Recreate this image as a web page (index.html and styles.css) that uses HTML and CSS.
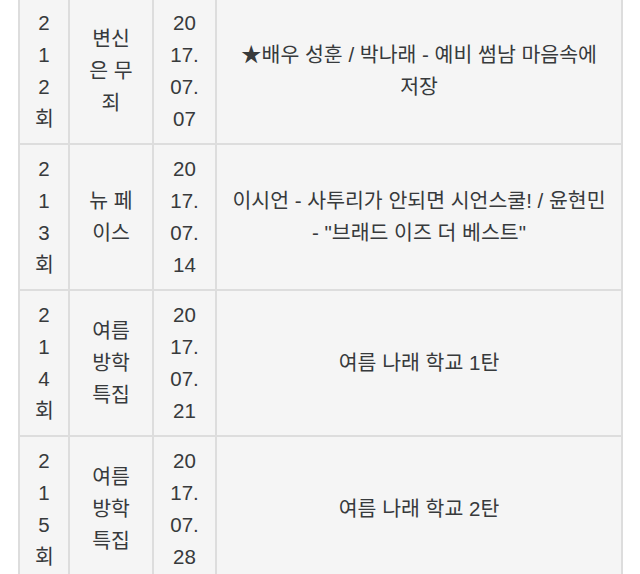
FILE: index.html
```html
<!DOCTYPE html>
<html lang="ko">
<head>
<meta charset="utf-8">
<title>방송 목록</title>
<link rel="stylesheet" href="styles.css">
</head>
<body>
<div class="wrap">
  <table class="episodes">
    <colgroup>
      <col class="c-no">
      <col class="c-title">
      <col class="c-date">
      <col class="c-desc">
    </colgroup>
    <tbody>
      <tr>
        <td class="no">212회</td>
        <td class="title">변신은 무죄</td>
        <td class="date">2017.07.07</td>
        <td class="desc">★배우 성훈 / 박나래 - 예비 썸남 마음속에 저장</td>
      </tr>
      <tr>
        <td class="no">213회</td>
        <td class="title">뉴 페이스</td>
        <td class="date">2017.07.14</td>
        <td class="desc">이시언 - 사투리가 안되면 시언스쿨! / 윤현민 - "브래드 이즈 더 베스트"</td>
      </tr>
      <tr>
        <td class="no">214회</td>
        <td class="title">여름 방학 특집</td>
        <td class="date">2017.07.21</td>
        <td class="desc">여름 나래 학교 1탄</td>
      </tr>
      <tr>
        <td class="no">215회</td>
        <td class="title">여름 방학 특집</td>
        <td class="date">2017.07.28</td>
        <td class="desc">여름 나래 학교 2탄</td>
      </tr>
    </tbody>
  </table>
</div>
</body>
</html>
```

FILE: styles.css
```css
html, body {
  margin: 0;
  padding: 0;
  background: #ffffff;
}

body {
  font-family: "Liberation Sans", "Noto Sans CJK KR", sans-serif;
  font-size: 20.5px;
  line-height: 32px;
  color: #373a3c;
  overflow: hidden;
}

.wrap {
  padding-left: 18px;
  margin-top: -3px;
}

.episodes {
  width: 605px;
  table-layout: fixed;
  border-collapse: collapse;
  background: #f5f5f5;
}

.c-no { width: 50px; }
.c-title { width: 84px; }
.c-date { width: 63px; }
.c-desc { width: 406px; }

.episodes td {
  border: 2px solid #dddddd;
  padding: 8px 15px;
  text-align: center;
  vertical-align: middle;
}

.episodes td.desc {
  padding: 8px 14px;
}

.episodes td.no,
.episodes td.date {
  word-break: break-all;
}
```
